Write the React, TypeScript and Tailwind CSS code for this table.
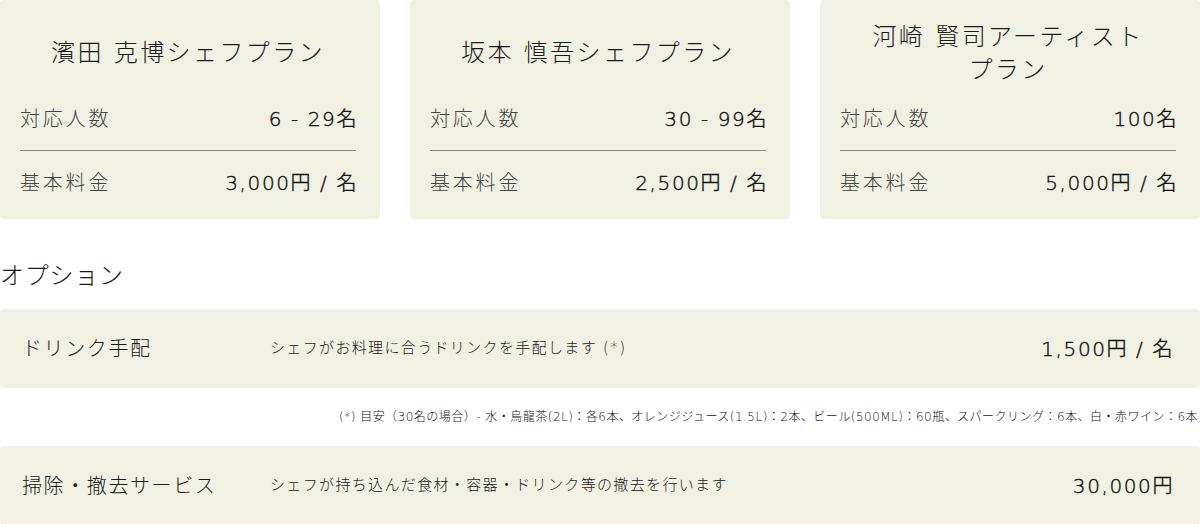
const FONT = "font-['DejaVu_Sans','Noto_Sans_CJK_JP',sans-serif]";

type Plan = {
  title: React.ReactNode;
  capacity: string;
  price: string;
};

const PLANS: Plan[] = [
  { title: '濱田 克博シェフプラン', capacity: '6 - 29名', price: '3,000円 / 名' },
  { title: '坂本 慎吾シェフプラン', capacity: '30 - 99名', price: '2,500円 / 名' },
  {
    title: (
      <>
        河崎 賢司アーティスト
        <br />
        プラン
      </>
    ),
    capacity: '100名',
    price: '5,000円 / 名',
  },
];

const OPTIONS = [
  {
    name: 'ドリンク手配',
    desc: 'シェフがお料理に合うドリンクを手配します (*)',
    price: '1,500円 / 名',
    note: '(*) 目安（30名の場合）- 水・烏龍茶(2L)：各6本、オレンジジュース(1.5L)：2本、ビール(500ML)：60瓶、スパークリング：6本、白・赤ワイン：6本',
  },
  {
    name: '掃除・撤去サービス',
    desc: 'シェフが持ち込んだ食材・容器・ドリンク等の撤去を行います',
    price: '30,000円',
  },
];

// light weight reads a bit too thin, so thicken the strokes slightly
const VALUE = 'text-[#111] [-webkit-text-stroke:0.4px_#111]';

function PlanCard({ plan }: { plan: Plan }) {
  return (
    <div className="rounded-[4px] bg-[#f1f1e3] pb-[4px] pl-5 pr-6 pt-5">
      <div className="flex h-[67px] items-center justify-center text-center text-[24px] leading-[33px] tracking-[0.1em] text-[#1a1a1a]">
        <div>{plan.title}</div>
      </div>
      <div className="flex h-16 items-center justify-between border-b border-[#8a8a8a] text-[20px]">
        <span className="tracking-[0.14em] text-[#444]">対応人数</span>
        <span className={`-mr-[2px] tracking-[0.08em] ${VALUE}`}>{plan.capacity}</span>
      </div>
      <div className="flex h-16 items-center justify-between text-[20px]">
        <span className="tracking-[0.14em] text-[#444]">基本料金</span>
        <span className={`-mr-[2px] tracking-[0.08em] ${VALUE}`}>{plan.price}</span>
      </div>
    </div>
  );
}

export default function App() {
  return (
    <div className={`${FONT} w-[1200px] bg-white font-light text-[#1a1a1a]`}>
      <div className="grid grid-cols-3 gap-[30px]">
        {PLANS.map((p, i) => (
          <PlanCard key={i} plan={p} />
        ))}
      </div>

      <h2 className="mt-10 text-[24px] leading-[34px] tracking-[0.03em]">オプション</h2>

      <div className="mt-[16px] flex flex-col">
        {OPTIONS.map((o) => (
          <div key={o.name}>
            <div className="flex h-[79px] items-center rounded-[4px] bg-[#f1f1e3] pl-[22px] pr-7">
              <span className="w-[248px] shrink-0 text-[20px] tracking-[0.08em]">{o.name}</span>
              <span className="flex-1 text-[15px] tracking-[0.09em]">{o.desc}</span>
              <span className={`-mr-[2px] text-[20px] tracking-[0.08em] ${VALUE}`}>{o.price}</span>
            </div>
            {o.note && (
              <div className="flex h-[58px] items-center justify-end whitespace-nowrap pr-[2px] text-[12px] tracking-[0.04em] text-[#111]">
                {o.note}
              </div>
            )}
          </div>
        ))}
      </div>
    </div>
  );
}
